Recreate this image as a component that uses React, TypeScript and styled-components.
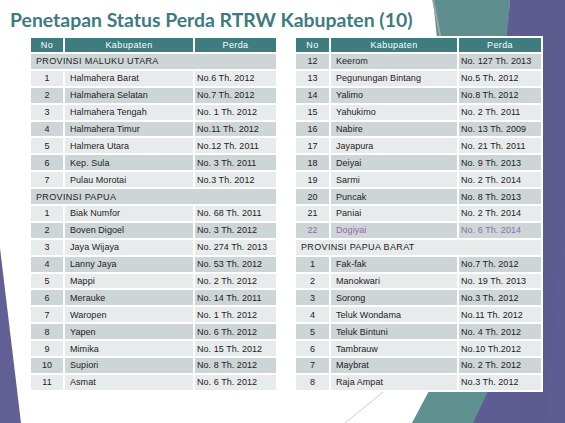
import * as React from "react";
import styled, { createGlobalStyle } from "styled-components";

const GlobalStyle = createGlobalStyle`
  html, body {
    margin: 0;
    padding: 0;
    background: #ffffff;
  }
`;

const SSlide = styled.div`
  position: relative;
  width: 565px;
  height: 423px;
  overflow: hidden;
  background: #ffffff;
  font-family: "Liberation Sans", Arial, sans-serif;
`;

const SBackdrop = styled.svg`
  position: absolute;
  top: 0;
  left: 0;
  z-index: 0;
`;

const SContent = styled.div`
  position: relative;
  z-index: 1;
  display: flex;
  flex-direction: column;
`;

const STitle = styled.h1`
  margin: 7px 0 0 10px;
  font-family: Lato, "Liberation Sans", sans-serif;
  font-weight: bold;
  font-size: 19.4px;
  line-height: 25px;
  color: #3d7b80;
  white-space: nowrap;
`;

const STables = styled.div`
  display: flex;
  gap: 16px;
  margin: 4px 0 0 29px;
`;

const STable = styled.table`
  border-collapse: separate;
  border-spacing: 2px;
  background: #ffffff;
  width: 249px;
  table-layout: fixed;
`;

const SHeadCell = styled.th<{ $w: number }>`
  width: ${(p) => p.$w}px;
  height: 14px;
  padding: 0;
  background: #3e7c80;
  color: #ffffff;
  font-weight: normal;
  font-size: 9px;
  letter-spacing: 0.4px;
  text-align: center;
`;

const SRow = styled.tr<{ $dark: boolean; $accent?: boolean }>`
  background: ${(p) => (p.$dark ? "#cdd5d6" : "#e8ebeb")};
  color: ${(p) => (p.$accent ? "#8c70a3" : "#222222")};
`;

const SCell = styled.td<{ $align?: string; $pad?: number }>`
  height: 14.9px;
  padding: 0 0 0 ${(p) => p.$pad ?? 0}px;
  font-size: 9px;
  letter-spacing: 0.05px;
  text-align: ${(p) => p.$align ?? "left"};
  white-space: nowrap;
  overflow: hidden;
`;

const SProvince = styled.td`
  height: 14.9px;
  padding: 0 0 0 5px;
  font-size: 9px;
  letter-spacing: 0.35px;
  white-space: nowrap;
`;

type Row = { no?: string; name: string; perda?: string; accent?: boolean };

const left: Row[] = [
  { name: "PROVINSI MALUKU UTARA" },
  { no: "1", name: "Halmahera Barat", perda: "No.6  Th. 2012" },
  { no: "2", name: "Halmahera Selatan", perda: "No.7  Th. 2012" },
  { no: "3", name: "Halmahera Tengah", perda: "No. 1 Th. 2012" },
  { no: "4", name: "Halmahera Timur", perda: "No.11 Th. 2012" },
  { no: "5", name: "Halmera Utara", perda: "No.12 Th. 2011" },
  { no: "6", name: "Kep. Sula", perda: "No. 3 Th. 2011" },
  { no: "7", name: "Pulau Morotai", perda: "No.3  Th. 2012" },
  { name: "PROVINSI PAPUA" },
  { no: "1", name: "Biak  Numfor", perda: "No. 68 Th. 2011" },
  { no: "2", name: "Boven Digoel", perda: "No. 3 Th. 2012" },
  { no: "3", name: "Jaya Wijaya", perda: "No. 274 Th. 2013" },
  { no: "4", name: "Lanny Jaya", perda: "No. 53 Th. 2012" },
  { no: "5", name: "Mappi", perda: "No. 2 Th. 2012" },
  { no: "6", name: "Merauke", perda: "No. 14 Th. 2011" },
  { no: "7", name: "Waropen", perda: "No. 1 Th. 2012" },
  { no: "8", name: "Yapen", perda: "No. 6 Th. 2012" },
  { no: "9", name: "Mimika", perda: "No. 15 Th. 2012" },
  { no: "10", name: "Supiori", perda: "No. 8 Th. 2012" },
  { no: "11", name: "Asmat", perda: "No. 6 Th. 2012" },
];

const right: Row[] = [
  { no: "12", name: "Keerom", perda: "No. 127  Th. 2013" },
  { no: "13", name: "Pegunungan Bintang", perda: "No.5 Th. 2012" },
  { no: "14", name: "Yalimo", perda: "No.8 Th. 2012" },
  { no: "15", name: "Yahukimo", perda: "No. 2  Th. 2011" },
  { no: "16", name: "Nabire", perda: "No. 13  Th. 2009" },
  { no: "17", name: "Jayapura", perda: "No. 21  Th. 2011" },
  { no: "18", name: "Deiyai", perda: "No. 9  Th. 2013" },
  { no: "19", name: "Sarmi", perda: "No. 2  Th. 2014" },
  { no: "20", name: "Puncak", perda: "No. 8  Th. 2013" },
  { no: "21", name: "Paniai", perda: "No. 2  Th. 2014" },
  { no: "22", name: "Dogiyai", perda: "No. 6  Th. 2014", accent: true },
  { name: "PROVINSI PAPUA BARAT" },
  { no: "1", name: "Fak-fak", perda: "No.7 Th. 2012" },
  { no: "2", name: "Manokwari", perda: "No. 19 Th. 2013" },
  { no: "3", name: "Sorong", perda: "No.3 Th. 2012" },
  { no: "4", name: "Teluk Wondama", perda: "No.11 Th. 2012" },
  { no: "5", name: "Teluk Bintuni", perda: "No. 4 Th. 2012" },
  { no: "6", name: "Tambrauw", perda: "No.10 Th.2012" },
  { no: "7", name: "Maybrat", perda: "No. 2  Th. 2012" },
  { no: "8", name: "Raja Ampat", perda: "No.3 Th. 2012" },
];

const PerdaTable = ({ rows, widths }: { rows: Row[]; widths: number[] }) => (
  <STable>
    <thead>
      <tr>
        <SHeadCell $w={widths[0]}>No</SHeadCell>
        <SHeadCell $w={widths[1]}>Kabupaten</SHeadCell>
        <SHeadCell $w={widths[2]}>Perda</SHeadCell>
      </tr>
    </thead>
    <tbody>
      {rows.map((r, i) =>
        r.no ? (
          <SRow key={i} $dark={i % 2 === 0} $accent={r.accent}>
            <SCell $align="center">{r.no}</SCell>
            <SCell $pad={5}>{r.name}</SCell>
            <SCell $pad={2}>{r.perda}</SCell>
          </SRow>
        ) : (
          <SRow key={i} $dark={i % 2 === 0}>
            <SProvince colSpan={3}>{r.name}</SProvince>
          </SRow>
        )
      )}
    </tbody>
  </STable>
);

const Backdrop = () => (
  <SBackdrop width="565" height="423" viewBox="0 0 565 423">
    <polygon points="0,248 21,423 0,423" fill="#625f94" />
    <polygon points="433,0 510,0 500,160 450,160" fill="#5e8e8d" />
    <polygon points="432,0 434,0 442,40 440,40" fill="#9aa9a8" />
    <polygon points="510,0 565,0 565,423 473,423" fill="#5e5d93" />
    <polygon points="520,0 565,0 565,200 545,423 520,423" fill="#5a5a8c" opacity="0.6" />
    <polygon points="440,370 498,370 473,423 412,423" fill="#5f9090" />
    <line x1="345" y1="423" x2="388" y2="388" stroke="#c8d0d0" strokeWidth="1" />
  </SBackdrop>
);

export default function App() {
  return (
    <>
      <GlobalStyle />
      <SSlide>
        <Backdrop />
        <SContent>
          <STitle>Penetapan Status Perda RTRW Kabupaten (10)</STitle>
          <STables>
            <PerdaTable rows={left} widths={[32, 128, 81]} />
            <PerdaTable rows={right} widths={[33, 126, 82]} />
          </STables>
        </SContent>
      </SSlide>
    </>
  );
}
